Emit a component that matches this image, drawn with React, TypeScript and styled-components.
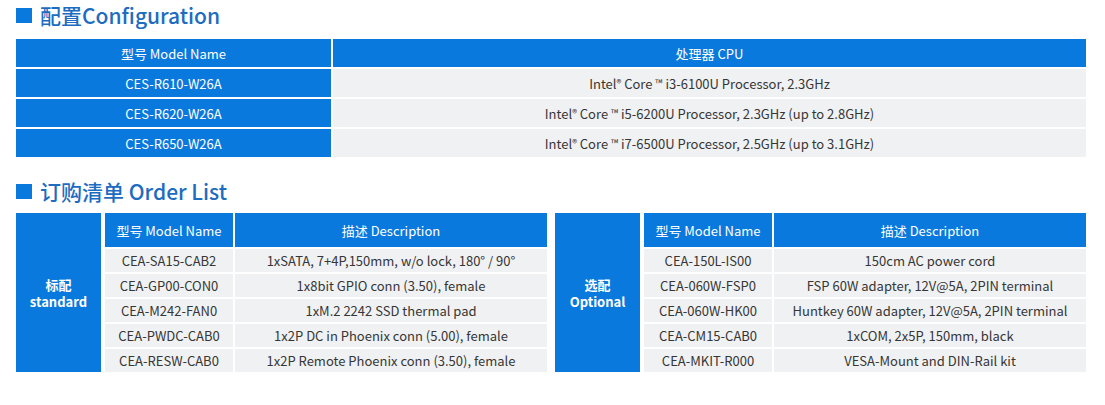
import React from 'react';
import styled, { createGlobalStyle } from 'styled-components';

const GlobalStyle = createGlobalStyle`
  html, body {
    margin: 0;
    padding: 0;
    background: #fff;
  }
  body {
    font-family: "Noto Sans CJK SC", "Noto Sans", sans-serif;
  }
`;

const BLUE = '#0a79dd';
const GRAY = '#f0f1f3';

const Page = styled.div`
  width: 1070px;
  padding-left: 16px;
`;

const Title = styled.h2<{ $top: number }>`
  display: flex;
  align-items: center;
  gap: 8px;
  height: 30px;
  margin: ${(p) => p.$top}px 0 0;
  font-size: 21px;
  font-weight: 500;
  line-height: 30px;
  color: #1d6cbf;

  &::before {
    content: '';
    width: 16px;
    height: 15px;
    background: ${BLUE};
  }
`;

const ConfigGrid = styled.div`
  display: grid;
  grid-template-columns: 315px 1fr;
  grid-auto-rows: 28px;
  gap: 2px;
  margin-top: 9px;
`;

const Cell = styled.div<{ $variant: 'head' | 'body' }>`
  display: flex;
  align-items: center;
  justify-content: center;
  font-size: 13px;
  white-space: nowrap;
  background: ${(p) => (p.$variant === 'head' ? BLUE : GRAY)};
  color: ${(p) => (p.$variant === 'head' ? '#fff' : '#363636')};
`;

const OrderRow = styled.div`
  display: flex;
  gap: 8px;
  margin-top: 7px;
`;

const OrderGrid = styled.div`
  display: grid;
  grid-template-columns: 87px 128px 312px;
  grid-template-rows: 34px repeat(5, 23px);
  gap: 2px;
`;

const Group = styled.div`
  grid-row: 1 / span 6;
  margin-right: 2px;
  display: flex;
  flex-direction: column;
  align-items: center;
  justify-content: center;
  background: ${BLUE};
  color: #fff;
  font-size: 13px;
  font-weight: 700;
  line-height: 17px;
`;

const Sup = styled.sup`
  font-size: 10px;
  vertical-align: 3px;
  line-height: 0;
`;

const configRows = [
  ['CES-R610-W26A', 'i3-6100U Processor, 2.3GHz'],
  ['CES-R620-W26A', 'i5-6200U Processor, 2.3GHz (up to 2.8GHz)'],
  ['CES-R650-W26A', 'i7-6500U Processor, 2.5GHz (up to 3.1GHz)'],
];

const standardItems = [
  ['CEA-SA15-CAB2', '1xSATA, 7+4P,150mm, w/o lock, 180° / 90°'],
  ['CEA-GP00-CON0', '1x8bit GPIO conn (3.50), female'],
  ['CEA-M242-FAN0', '1xM.2 2242 SSD thermal pad'],
  ['CEA-PWDC-CAB0', '1x2P DC in Phoenix conn (5.00), female'],
  ['CEA-RESW-CAB0', '1x2P Remote Phoenix conn (3.50), female'],
];

const optionalItems = [
  ['CEA-150L-IS00', '150cm AC power cord'],
  ['CEA-060W-FSP0', 'FSP 60W adapter, 12V@5A, 2PIN terminal'],
  ['CEA-060W-HK00', 'Huntkey 60W adapter, 12V@5A, 2PIN terminal'],
  ['CEA-CM15-CAB0', '1xCOM, 2x5P, 150mm, black'],
  ['CEA-MKIT-R000', 'VESA-Mount and DIN-Rail kit'],
];

const OrderTable: React.FC<{ zh: string; en: string; items: string[][] }> = ({ zh, en, items }) => (
  <OrderGrid>
    <Group>
      <span>{zh}</span>
      <span>{en}</span>
    </Group>
    <Cell $variant="head">型号 Model Name</Cell>
    <Cell $variant="head">描述 Description</Cell>
    {items.map(([model, desc]) => (
      <React.Fragment key={model}>
        <Cell $variant="body">{model}</Cell>
        <Cell $variant="body">{desc}</Cell>
      </React.Fragment>
    ))}
  </OrderGrid>
);

export default function App() {
  return (
    <Page>
      <GlobalStyle />
      <Title $top={0}>配置Configuration</Title>
      <ConfigGrid>
        <Cell $variant="head">型号 Model Name</Cell>
        <Cell $variant="head">处理器 CPU</Cell>
        {configRows.map(([model, cpu]) => (
          <React.Fragment key={model}>
            <Cell $variant="head">{model}</Cell>
            <Cell $variant="body">
              Intel<Sup>®</Sup>&nbsp;Core&nbsp;<Sup>™</Sup>&nbsp;{cpu}
            </Cell>
          </React.Fragment>
        ))}
      </ConfigGrid>
      <Title $top={19}>订购清单 Order List</Title>
      <OrderRow>
        <OrderTable zh="标配" en="standard" items={standardItems} />
        <OrderTable zh="选配" en="Optional" items={optionalItems} />
      </OrderRow>
    </Page>
  );
}
